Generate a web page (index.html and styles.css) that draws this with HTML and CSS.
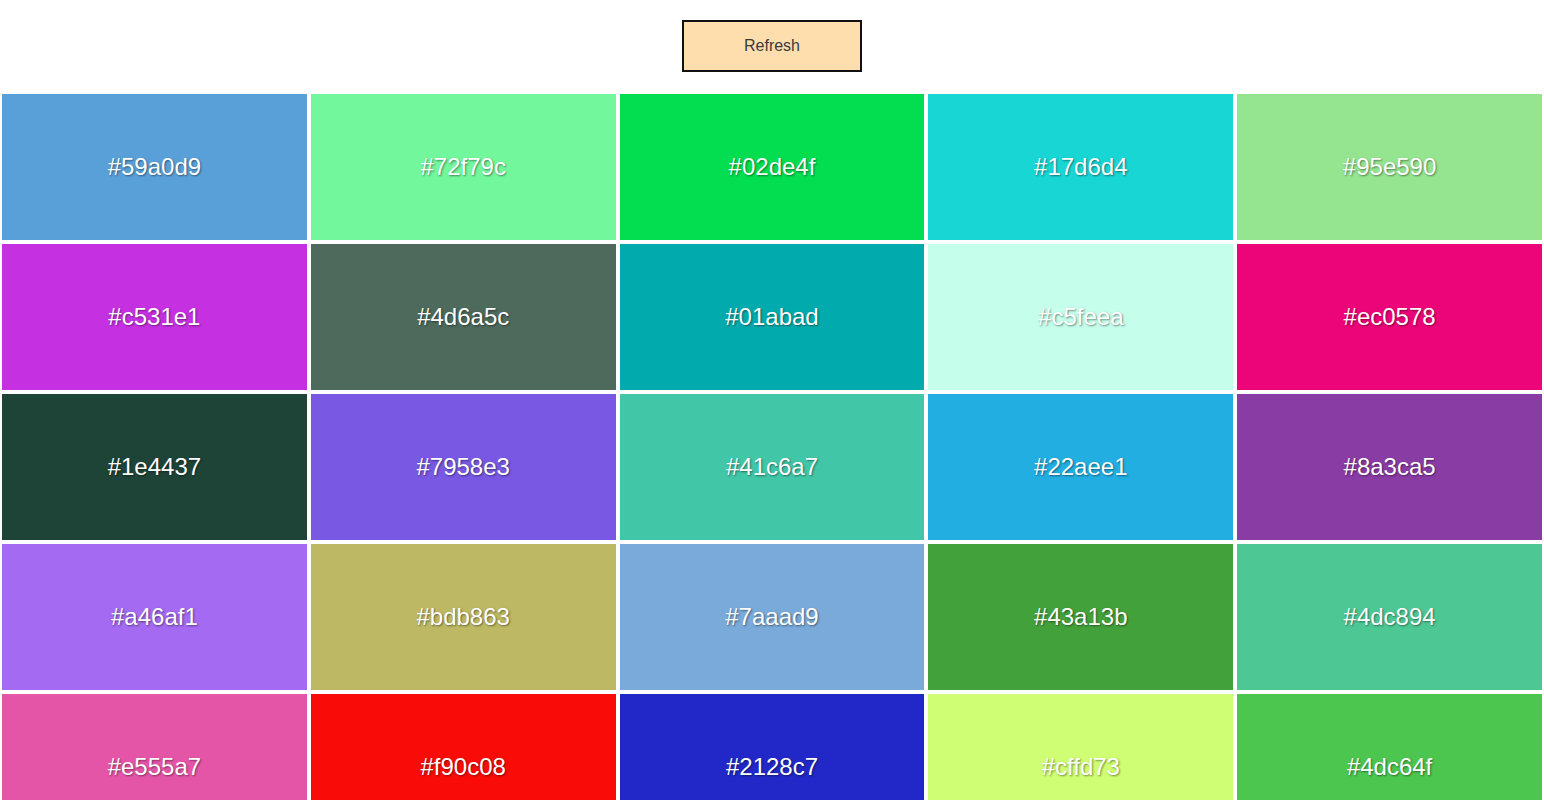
FILE: index.html
```html
<!DOCTYPE html>
<html>
<head>
<meta charset="utf-8">
<link rel="stylesheet" href="styles.css">
</head>
<body>
<div class="top">
  <button class="refresh">Refresh</button>
</div>
<div class="grid">
  <div class="cell" style="background:#59a0d9">#59a0d9</div>
  <div class="cell" style="background:#72f79c">#72f79c</div>
  <div class="cell" style="background:#02de4f">#02de4f</div>
  <div class="cell" style="background:#17d6d4">#17d6d4</div>
  <div class="cell" style="background:#95e590">#95e590</div>
  <div class="cell" style="background:#c531e1">#c531e1</div>
  <div class="cell" style="background:#4d6a5c">#4d6a5c</div>
  <div class="cell" style="background:#01abad">#01abad</div>
  <div class="cell" style="background:#c5feea">#c5feea</div>
  <div class="cell" style="background:#ec0578">#ec0578</div>
  <div class="cell" style="background:#1e4437">#1e4437</div>
  <div class="cell" style="background:#7958e3">#7958e3</div>
  <div class="cell" style="background:#41c6a7">#41c6a7</div>
  <div class="cell" style="background:#22aee1">#22aee1</div>
  <div class="cell" style="background:#8a3ca5">#8a3ca5</div>
  <div class="cell" style="background:#a46af1">#a46af1</div>
  <div class="cell" style="background:#bdb863">#bdb863</div>
  <div class="cell" style="background:#7aaad9">#7aaad9</div>
  <div class="cell" style="background:#43a13b">#43a13b</div>
  <div class="cell" style="background:#4dc894">#4dc894</div>
  <div class="cell" style="background:#e555a7">#e555a7</div>
  <div class="cell" style="background:#f90c08">#f90c08</div>
  <div class="cell" style="background:#2128c7">#2128c7</div>
  <div class="cell" style="background:#cffd73">#cffd73</div>
  <div class="cell" style="background:#4dc64f">#4dc64f</div>
</div>
</body>
</html>
```
FILE: styles.css
```css
html, body {
  margin: 0;
  padding: 0;
  background: #ffffff;
  font-family: "Liberation Sans", Arial, sans-serif;
}
.top {
  display: flex;
  justify-content: center;
  padding-top: 20px;
  padding-bottom: 22px;
}
.refresh {
  width: 180px;
  height: 52px;
  background: #fddeac;
  border: 2px solid #111111;
  font-family: "Liberation Sans", Arial, sans-serif;
  font-size: 16px;
  line-height: 18px;
  color: #3a3a3a;
  padding: 0;
}
.grid {
  display: grid;
  grid-template-columns: repeat(5, 1fr);
  gap: 4px;
  padding: 0 2px;
}
.cell {
  height: 146px;
  display: flex;
  align-items: center;
  justify-content: center;
  color: #ffffff;
  font-size: 24px;
  text-shadow: 1px 1px 2px rgba(0, 0, 0, 0.45);
}
```
